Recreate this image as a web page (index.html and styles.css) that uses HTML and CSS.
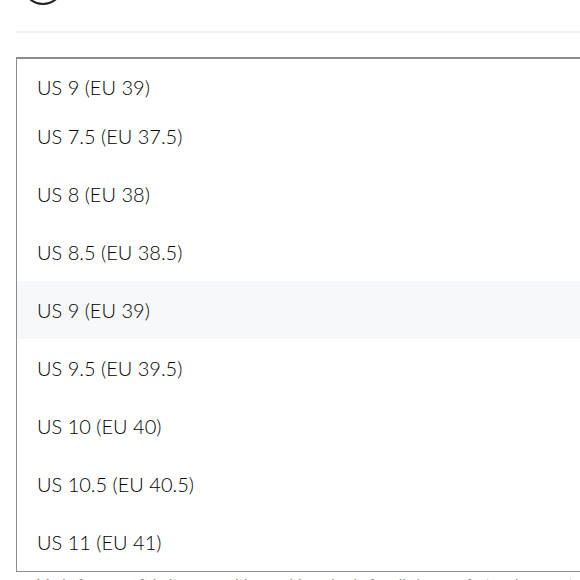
FILE: index.html
```html
<!DOCTYPE html>
<html>
<head>
<meta charset="utf-8">
<link rel="stylesheet" href="styles.css">
</head>
<body>
<div class="page">
  <header class="header">
    <svg class="logo" width="44" height="44" viewBox="0 0 44 44">
      <circle cx="22" cy="22" r="20" fill="none" stroke="#222" stroke-width="2"/>
      <path d="M8 30 Q22 40 36 30" fill="none" stroke="#222" stroke-width="2"/>
    </svg>
  </header>
  <div class="divider"></div>
  <div class="listbox">
    <div class="option first">US 9 (EU 39)</div>
    <div class="option">US 7.5 (EU 37.5)</div>
    <div class="option">US 8 (EU 38)</div>
    <div class="option">US 8.5 (EU 38.5)</div>
    <div class="option active">US 9 (EU 39)</div>
    <div class="option">US 9.5 (EU 39.5)</div>
    <div class="option">US 10 (EU 40)</div>
    <div class="option">US 10.5 (EU 40.5)</div>
    <div class="option">US 11 (EU 41)</div>
  </div>
  <p class="below">Made from a soft knit upper with a cushioned sole for all-day comfort and support.</p>
</div>
</body>
</html>
```
FILE: styles.css
```css
html, body {
  margin: 0;
  padding: 0;
  background: #fff;
  overflow: hidden;
}
.page {
  width: 580px;
  height: 580px;
  overflow: hidden;
  padding-left: 16px;
  box-sizing: border-box;
  font-family: "Lato", "Liberation Sans", sans-serif;
  color: #000;
}
.header {
  height: 31px;
  display: flex;
  align-items: flex-start;
}
.logo {
  margin-top: -38px;
  margin-left: 5px;
}
.divider {
  height: 2px;
  background: #f1f1f1;
  margin-right: -20px;
}
.listbox {
  margin-top: 24px;
  width: 600px;
  border: 1px solid #8c8c8c;
  border-top: 2px solid #8c8c8c;
  box-sizing: border-box;
  background: #fff;
}
.option {
  height: 58px;
  display: flex;
  align-items: center;
  padding-left: 20px;
  font-size: 20px;
  font-weight: 300;
  color: #000;
}
.option.first {
  height: 48px;
  padding-top: 7px;
  box-sizing: border-box;
}
.option.active {
  background: #f7f8fa;
}
.below {
  margin: 3px 0 0 20px;
  font-size: 15px;
  color: #888;
  white-space: nowrap;
}
```
